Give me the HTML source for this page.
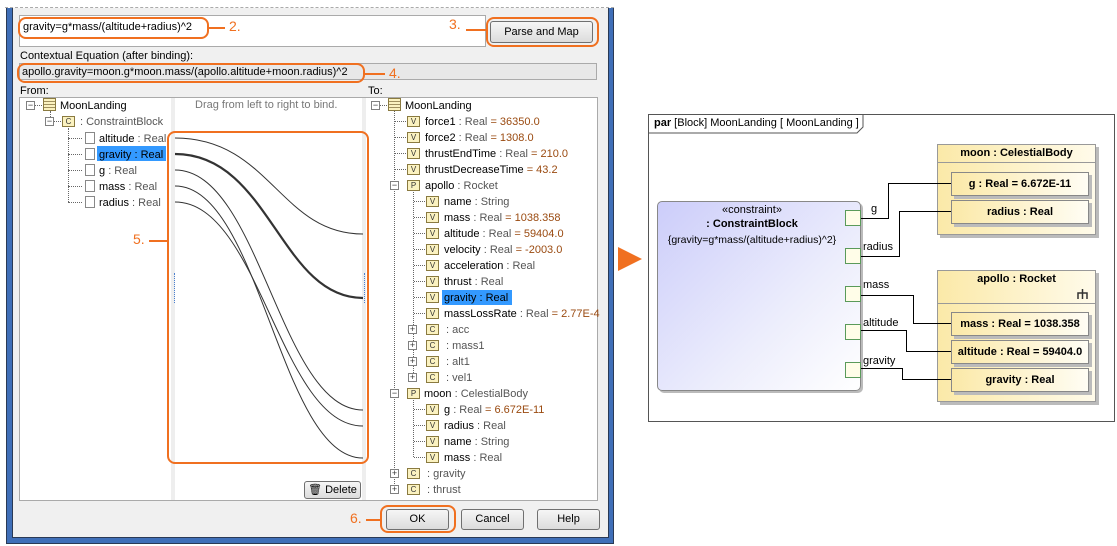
<!DOCTYPE html><html><head><meta charset="utf-8"><style>
*{margin:0;padding:0;box-sizing:border-box}
body{width:1117px;height:546px;background:#fff;position:relative;overflow:hidden;font-family:"Liberation Sans",sans-serif;font-size:11px;color:#000}
.a{position:absolute;white-space:nowrap}
.btn{position:absolute;border:1px solid #707070;border-radius:3px;background:linear-gradient(#f6f6f6,#dcdcdc);text-align:center;font-size:11px}
.or{position:absolute;border:2px solid #f07020;border-radius:8px}
.on{position:absolute;color:#f07020;font-size:14px}
.ic{position:absolute;width:13px;height:11px;border:1px solid #8a7a40;background:#fbf2c0;font-size:8px;text-align:center;line-height:9px;color:#333}
.pm{position:absolute;width:9px;height:9px;border:1px solid #808080;background:#fff;font-size:9px;line-height:7px;text-align:center;color:#333}
.t{position:absolute;white-space:nowrap;line-height:14px}
.g{color:#555}.v{color:#9a4a10}
.dl{position:absolute;border-left:1px dotted #666}
.dh{position:absolute;border-top:1px dotted #666;height:0}
.box{position:absolute;border:1px solid #999;background:linear-gradient(90deg,#fbe9a8,#fffbea);box-shadow:3px 3px 0 #bbb}
.part{position:absolute;border:1px solid #888;background:linear-gradient(90deg,#fbe9a8,#fffdf4);box-shadow:3px 3px 0 #bbb;text-align:center;font-weight:bold;font-size:11px;line-height:22px}
.port{position:absolute;width:16px;height:16px;border:1px solid #5a9a5a;background:#fffde8}
</style></head><body>
<!-- dialog frame -->
<div class="a" style="left:6px;top:5px;width:608px;height:539px;background:#3f6fb8;border:1px solid #2a3a55"></div>
<div class="a" style="left:12px;top:5px;width:597px;height:533px;background:#f0f0f0;border-left:1px solid #2a3a55;border-right:1px solid #2a3a55;border-bottom:1px solid #2a3a55"></div>
<div class="a" style="left:5px;top:0;width:609px;height:8px;background:#fff;border-bottom:1px dashed #aaa"></div>
<!-- top field -->
<div class="a" style="left:19px;top:15px;width:467px;height:32px;background:#fff;border:1px solid #aaa"></div>
<div class="t" style="left:23px;top:20px">gravity=g*mass/(altitude+radius)^2</div>
<div class="btn" style="left:490px;top:21px;width:103px;height:22px;line-height:20px">Parse and Map</div>
<div class="t" style="left:20px;top:49px">Contextual Equation (after binding):</div>
<div class="a" style="left:19px;top:63px;width:578px;height:17px;background:#e8e8e8;border:1px solid #aaa"></div>
<div class="t" style="left:22px;top:65px">apollo.gravity=moon.g*moon.mass/(apollo.altitude+moon.radius)^2</div>
<div class="t" style="left:20px;top:84px">From:</div>
<div class="t" style="left:368px;top:84px">To:</div>
<!-- panes -->
<div class="a" style="left:19px;top:97px;width:579px;height:404px;background:#fff;border:1px solid #aaa"></div>
<div class="a" style="left:171px;top:98px;width:4px;height:402px;background:#eee"></div>
<div class="a" style="left:362px;top:98px;width:4px;height:402px;background:#eee"></div>
<div class="a" style="left:174px;top:273px;height:30px;border-left:1px dotted #4a80d0"></div>
<div class="a" style="left:364px;top:273px;height:30px;border-left:1px dotted #4a80d0"></div>
<div class="t g" style="left:195px;top:98px;color:#777">Drag from left to right to bind.</div>
<!-- left tree -->
<div class="pm" style="left:26px;top:101px">−</div><div class="dh" style="left:35px;top:105px;width:7px"></div>
<div class="a" style="left:43px;top:98px;width:13px;height:13px;border:1px solid #8a7a40;background:repeating-linear-gradient(#fbf2c0 0 2px,#a09060 2px 3px)"></div>
<div class="t" style="left:60px;top:99px">MoonLanding</div>
<div class="dl" style="left:50px;top:111px;height:6px"></div>
<div class="pm" style="left:45px;top:117px">−</div><div class="dh" style="left:54px;top:121px;width:7px"></div>
<div class="ic" style="left:62px;top:116px">C</div>
<div class="t g" style="left:80px;top:115px">: ConstraintBlock</div>
<div class="dl" style="left:68px;top:128px;height:74px"></div>
<div class="dh" style="left:68px;top:138px;width:14px"></div><div class="dh" style="left:68px;top:154px;width:14px"></div><div class="dh" style="left:68px;top:170px;width:14px"></div><div class="dh" style="left:68px;top:186px;width:14px"></div><div class="dh" style="left:68px;top:202px;width:14px"></div>
<div class="a" style="left:85px;top:132px;width:10px;height:12px;border:1px solid #888;background:#fff"></div>
<div class="a" style="left:85px;top:148px;width:10px;height:12px;border:1px solid #888;background:#fff"></div>
<div class="a" style="left:85px;top:164px;width:10px;height:12px;border:1px solid #888;background:#fff"></div>
<div class="a" style="left:85px;top:180px;width:10px;height:12px;border:1px solid #888;background:#fff"></div>
<div class="a" style="left:85px;top:196px;width:10px;height:12px;border:1px solid #888;background:#fff"></div>
<div class="t" style="left:99px;top:132px">altitude <span class="g">: Real</span></div>
<div class="a" style="left:97px;top:146px;width:69px;height:15px;background:#3399ff"></div>
<div class="t" style="left:99px;top:148px">gravity : Real</div>
<div class="t" style="left:99px;top:164px">g <span class="g">: Real</span></div>
<div class="t" style="left:99px;top:180px">mass <span class="g">: Real</span></div>
<div class="t" style="left:99px;top:196px">radius <span class="g">: Real</span></div>
<!-- curves -->
<svg class="a" style="left:0;top:0" width="620" height="546">
<g fill="none" stroke="#333" stroke-width="1">
<path d="M175 138 C270 138 280 234 363 234"/>
<path d="M175 154 C270 154 280 298 363 298" stroke-width="2.2"/>
<path d="M175 170 C260 170 280 410 363 410"/>
<path d="M175 186 C260 186 280 458 363 458"/>
<path d="M175 202 C260 202 280 426 363 426"/>
</g></svg>
<!-- right tree -->
<div class="pm" style="left:371px;top:101px">−</div><div class="dh" style="left:380px;top:105px;width:7px"></div>
<div class="a" style="left:388px;top:98px;width:13px;height:13px;border:1px solid #8a7a40;background:repeating-linear-gradient(#fbf2c0 0 2px,#a09060 2px 3px)"></div>
<div class="t" style="left:405px;top:99px">MoonLanding</div>
<div class="dl" style="left:394px;top:111px;height:379px"></div>
<div class="dl" style="left:413px;top:192px;height:185px"></div>
<div class="dl" style="left:413px;top:400px;height:57px"></div>
<div class="a" style="left:442px;top:290px;width:70px;height:15px;background:#3399ff"></div>
<div class="dh" style="left:395px;top:121px;width:11px"></div><div class="ic" style="left:407px;top:116px">V</div><div class="t" style="left:425px;top:115px">force1 <span class="g">: Real</span> <span class="v">= 36350.0</span></div>
<div class="dh" style="left:395px;top:137px;width:11px"></div><div class="ic" style="left:407px;top:132px">V</div><div class="t" style="left:425px;top:131px">force2 <span class="g">: Real</span> <span class="v">= 1308.0</span></div>
<div class="dh" style="left:395px;top:153px;width:11px"></div><div class="ic" style="left:407px;top:148px">V</div><div class="t" style="left:425px;top:147px">thrustEndTime <span class="g">: Real</span> <span class="v">= 210.0</span></div>
<div class="dh" style="left:395px;top:169px;width:11px"></div><div class="ic" style="left:407px;top:164px">V</div><div class="t" style="left:425px;top:163px">thrustDecreaseTime <span class="v">= 43.2</span></div>
<div class="pm" style="left:390px;top:181px">−</div><div class="ic" style="left:407px;top:180px">P</div><div class="t" style="left:425px;top:179px">apollo <span class="g">: Rocket</span></div>
<div class="dh" style="left:414px;top:201px;width:11px"></div><div class="ic" style="left:426px;top:196px">V</div><div class="t" style="left:444px;top:195px">name <span class="g">: String</span></div>
<div class="dh" style="left:414px;top:217px;width:11px"></div><div class="ic" style="left:426px;top:212px">V</div><div class="t" style="left:444px;top:211px">mass <span class="g">: Real</span> <span class="v">= 1038.358</span></div>
<div class="dh" style="left:414px;top:233px;width:11px"></div><div class="ic" style="left:426px;top:228px">V</div><div class="t" style="left:444px;top:227px">altitude <span class="g">: Real</span> <span class="v">= 59404.0</span></div>
<div class="dh" style="left:414px;top:249px;width:11px"></div><div class="ic" style="left:426px;top:244px">V</div><div class="t" style="left:444px;top:243px">velocity <span class="g">: Real</span> <span class="v">= -2003.0</span></div>
<div class="dh" style="left:414px;top:265px;width:11px"></div><div class="ic" style="left:426px;top:260px">V</div><div class="t" style="left:444px;top:259px">acceleration <span class="g">: Real</span></div>
<div class="dh" style="left:414px;top:281px;width:11px"></div><div class="ic" style="left:426px;top:276px">V</div><div class="t" style="left:444px;top:275px">thrust <span class="g">: Real</span></div>
<div class="dh" style="left:414px;top:297px;width:11px"></div><div class="ic" style="left:426px;top:292px">V</div><div class="t" style="left:444px;top:291px">gravity : Real</div>
<div class="dh" style="left:414px;top:313px;width:11px"></div><div class="ic" style="left:426px;top:308px">V</div><div class="t" style="left:444px;top:307px">massLossRate <span class="g">: Real</span> <span class="v">= 2.77E-4</span></div>
<div class="pm" style="left:408px;top:325px">+</div><div class="ic" style="left:426px;top:324px">C</div><div class="t g" style="left:446px;top:323px">: acc</div>
<div class="pm" style="left:408px;top:341px">+</div><div class="ic" style="left:426px;top:340px">C</div><div class="t g" style="left:446px;top:339px">: mass1</div>
<div class="pm" style="left:408px;top:357px">+</div><div class="ic" style="left:426px;top:356px">C</div><div class="t g" style="left:446px;top:355px">: alt1</div>
<div class="pm" style="left:408px;top:373px">+</div><div class="ic" style="left:426px;top:372px">C</div><div class="t g" style="left:446px;top:371px">: vel1</div>
<div class="pm" style="left:390px;top:389px">−</div><div class="ic" style="left:407px;top:388px">P</div><div class="t" style="left:424px;top:387px">moon <span class="g">: CelestialBody</span></div>
<div class="dh" style="left:414px;top:409px;width:11px"></div><div class="ic" style="left:426px;top:404px">V</div><div class="t" style="left:444px;top:403px">g <span class="g">: Real</span> <span class="v">= 6.672E-11</span></div>
<div class="dh" style="left:414px;top:425px;width:11px"></div><div class="ic" style="left:426px;top:420px">V</div><div class="t" style="left:444px;top:419px">radius <span class="g">: Real</span></div>
<div class="dh" style="left:414px;top:441px;width:11px"></div><div class="ic" style="left:426px;top:436px">V</div><div class="t" style="left:444px;top:435px">name <span class="g">: String</span></div>
<div class="dh" style="left:414px;top:457px;width:11px"></div><div class="ic" style="left:426px;top:452px">V</div><div class="t" style="left:444px;top:451px">mass <span class="g">: Real</span></div>
<div class="pm" style="left:390px;top:469px">+</div><div class="ic" style="left:407px;top:468px">C</div><div class="t g" style="left:427px;top:467px">: gravity</div>
<div class="pm" style="left:390px;top:485px">+</div><div class="ic" style="left:407px;top:484px">C</div><div class="t g" style="left:427px;top:483px">: thrust</div>
<div class="btn" style="left:304px;top:481px;width:57px;height:18px;line-height:16px">🗑 Delete</div>
<!-- bottom buttons -->
<div class="btn" style="left:386px;top:509px;width:63px;height:21px;line-height:19px">OK</div>
<div class="btn" style="left:461px;top:509px;width:63px;height:21px;line-height:19px">Cancel</div>
<div class="btn" style="left:537px;top:509px;width:63px;height:21px;line-height:19px">Help</div>
<!-- orange annotations -->
<div class="or" style="left:18px;top:17px;width:191px;height:22px"></div>
<div class="a" style="left:209px;top:27px;width:16px;border-top:2px solid #f07020"></div><div class="on" style="left:229px;top:18px">2.</div>
<div class="on" style="left:449px;top:16px">3.</div><div class="a" style="left:466px;top:29px;width:20px;border-top:2px solid #f07020"></div>
<div class="or" style="left:486px;top:17px;width:113px;height:30px"></div>
<div class="or" style="left:17px;top:63px;width:348px;height:20px"></div>
<div class="a" style="left:365px;top:73px;width:20px;border-top:2px solid #f07020"></div><div class="on" style="left:389px;top:65px">4.</div>
<div class="or" style="left:167px;top:131px;width:202px;height:333px"></div>
<div class="on" style="left:133px;top:231px">5.</div><div class="a" style="left:149px;top:240px;width:18px;border-top:2px solid #f07020"></div>
<div class="on" style="left:350px;top:510px">6.</div><div class="a" style="left:366px;top:519px;width:14px;border-top:2px solid #f07020"></div>
<div class="or" style="left:380px;top:505px;width:76px;height:28px"></div>
<!-- arrow -->
<svg class="a" style="left:617px;top:246px" width="26" height="26"><path d="M1 1 L25 13 L1 25 Z" fill="#f07020"/></svg>
<!-- diagram -->
<div class="a" style="left:648px;top:114px;width:467px;height:308px;border:1px solid #555;background:#fff"></div>
<svg class="a" style="left:648px;top:114px" width="220" height="20"><path d="M0 19 H209 L215 13 V0" fill="none" stroke="#555"/></svg>
<div class="t" style="left:654px;top:116px"><b>par</b> [Block] MoonLanding [ MoonLanding ]</div>
<div class="a" style="left:657px;top:201px;width:204px;height:190px;border:1px solid #888;border-radius:5px;background:linear-gradient(135deg,#cccdfa,#ecedfc 60%,#fff);box-shadow:2px 2px 0 #bbb"></div>
<div class="t" style="left:657px;top:203px;width:190px;text-align:center">«constraint»</div>
<div class="t" style="left:657px;top:217px;width:190px;text-align:center;font-weight:bold">: ConstraintBlock</div>
<div class="t" style="left:657px;top:233px;width:190px;text-align:center;font-size:10.5px">{gravity=g*mass/(altitude+radius)^2}</div>
<div class="port" style="left:845px;top:210px"></div>
<div class="port" style="left:845px;top:248px"></div>
<div class="port" style="left:845px;top:286px"></div>
<div class="port" style="left:845px;top:324px"></div>
<div class="port" style="left:845px;top:362px"></div>
<div class="t" style="left:871px;top:202px">g</div>
<div class="t" style="left:863px;top:240px">radius</div>
<div class="t" style="left:863px;top:278px">mass</div>
<div class="t" style="left:863px;top:316px">altitude</div>
<div class="t" style="left:863px;top:354px">gravity</div>
<div class="box" style="left:937px;top:144px;width:159px;height:91px"></div>
<div class="a" style="left:937px;top:162px;width:159px;border-top:1px solid #999"></div>
<div class="t" style="left:937px;top:146px;width:159px;text-align:center;font-weight:bold">moon : CelestialBody</div>
<div class="part" style="left:951px;top:172px;width:138px;height:24px">g : Real = 6.672E-11</div>
<div class="part" style="left:951px;top:200px;width:138px;height:24px">radius : Real</div>
<div class="box" style="left:937px;top:270px;width:159px;height:132px"></div>
<div class="a" style="left:937px;top:303px;width:159px;border-top:1px solid #999"></div>
<div class="t" style="left:937px;top:272px;width:159px;text-align:center;font-weight:bold">apollo : Rocket</div>
<svg class="a" style="left:1077px;top:288px" width="12" height="12"><path d="M1 11 V5 H10 V11 M5.5 1 V11" fill="none" stroke="#333" stroke-width="1.5"/></svg>
<div class="part" style="left:951px;top:312px;width:138px;height:24px">mass : Real = 1038.358</div>
<div class="part" style="left:951px;top:340px;width:138px;height:24px">altitude : Real = 59404.0</div>
<div class="part" style="left:951px;top:368px;width:138px;height:24px">gravity : Real</div>
<svg class="a" style="left:0;top:0" width="1117" height="546"><g fill="none" stroke="#000">
<path d="M861 218.5 H888.5 V183.5 H951"/>
<path d="M861 256.5 H899.5 V211.5 H951"/>
<path d="M861 295.5 H913.5 V323.5 H951"/>
<path d="M861 330.5 H906.5 V351.5 H951"/>
<path d="M861 368.5 H902.5 V379.5 H951"/>
</g></svg>
</body></html>
